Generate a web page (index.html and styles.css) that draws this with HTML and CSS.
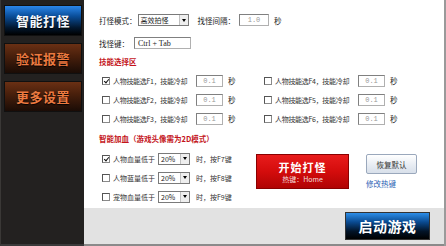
FILE: index.html
```html
<!DOCTYPE html>
<html>
<head>
<meta charset="utf-8">
<link rel="stylesheet" href="styles.css">
</head>
<body>
<div class="app">
  <nav class="side">
    <div class="nav-btn blue">智能打怪</div>
    <div class="nav-btn brown">验证报警</div>
    <div class="nav-btn brown">更多设置</div>
  </nav>
  <div class="main">
    <div class="content">
      <div class="row r1">
        <span class="lbl">打怪模式：</span>
        <span class="select sel-mode"><span class="sel-text">高效拍怪</span><span class="arrow"></span></span>
        <span class="lbl gap-l">找怪间隔：</span>
        <span class="input in-int">1.0</span>
        <span class="unit">秒</span>
      </div>
      <div class="row r2">
        <span class="lbl">找怪键：</span>
        <span class="input in-key">Ctrl + Tab</span>
      </div>
      <div class="title t1">技能选择区</div>
      <div class="skills">
        <div class="sk"><span class="cb checked"></span><span class="txt">人物技能选F1，技能冷却</span><span class="input in-cd">0.1</span><span class="unit">秒</span></div>
        <div class="sk"><span class="cb"></span><span class="txt">人物技能选F4，技能冷却</span><span class="input in-cd">0.1</span><span class="unit">秒</span></div>
        <div class="sk"><span class="cb"></span><span class="txt">人物技能选F2，技能冷却</span><span class="input in-cd">0.1</span><span class="unit">秒</span></div>
        <div class="sk"><span class="cb"></span><span class="txt">人物技能选F5，技能冷却</span><span class="input in-cd">0.1</span><span class="unit">秒</span></div>
        <div class="sk"><span class="cb"></span><span class="txt">人物技能选F3，技能冷却</span><span class="input in-cd">0.1</span><span class="unit">秒</span></div>
        <div class="sk"><span class="cb"></span><span class="txt">人物技能选F6，技能冷却</span><span class="input in-cd">0.1</span><span class="unit">秒</span></div>
      </div>
      <div class="title t2">智能加血（游戏头像需为2D模式）</div>
      <div class="heal">
        <div class="heal-rows">
          <div class="hr"><span class="cb checked"></span><span class="txt">人物血量低于</span><span class="select sel-pct"><span class="sel-text">20%</span><span class="arrow"></span></span><span class="txt2">时，按F7键</span></div>
          <div class="hr"><span class="cb"></span><span class="txt">人物蓝量低于</span><span class="select sel-pct"><span class="sel-text">20%</span><span class="arrow"></span></span><span class="txt2">时，按F8键</span></div>
          <div class="hr"><span class="cb"></span><span class="txt">宠物血量低于</span><span class="select sel-pct"><span class="sel-text">20%</span><span class="arrow"></span></span><span class="txt2">时，按F9键</span></div>
        </div>
        <div class="start">
          <div class="start-main">开始打怪</div>
          <div class="start-sub">热键：Home</div>
        </div>
        <div class="aux">
          <div class="reset">恢复默认</div>
          <div class="link">修改热键</div>
        </div>
      </div>
    </div>
    <div class="bottom">
      <div class="launch">启动游戏</div>
    </div>
  </div>
</div>
</body>
</html>
```
FILE: styles.css
```css
* { box-sizing: border-box; }
html, body { margin: 0; padding: 0; }
body {
  width: 446px; height: 246px; overflow: hidden;
  font-family: "Noto Sans CJK SC", "Noto Sans", sans-serif;
  font-size: 7.5px; color: #222; background: #d6d6d6;
  white-space: nowrap;
}
.app { display: flex; width: 446px; height: 246px; }
.side {
  width: 84px; height: 246px; background: #232120;
  border-left: 1px solid #3a3836; border-bottom: 2px solid #3a3a3a;
  display: flex; flex-direction: column; padding: 5px 2px 0 3px; gap: 7px;
}
.nav-btn {
  height: 31px; display: flex; align-items: center; justify-content: center;
  font-size: 13px; font-weight: bold; letter-spacing: 0.5px;
  border: 1px solid #101010;
}
.nav-btn.blue {
  color: #f4f8ff;
  background: linear-gradient(#2a86ea 0%, #0a4e9a 35%, #02172e 75%, #000 100%);
  text-shadow: 0 1px 1px #000;
}
.nav-btn.brown {
  color: #ec7a40;
  background: linear-gradient(#6a3014 0%, #4a200c 40%, #1a0c06 100%);
  text-shadow: 0 1px 1px #000;
}
.main {
  flex: 1; display: flex; flex-direction: column;
  border-right: 2px solid #9a9a9a;
}
.content {
  height: 208px; background: #fff; padding: 14px 0 0 15px;
  display: flex; flex-direction: column;
}
.row { display: flex; align-items: center; height: 12px; }
.r2 { margin-top: 11px; }
.gap-l { margin-left: 9px; margin-right: 4px; }
.r1 .lbl:first-child { margin-right: 1px; }
.r2 .lbl { margin-right: 5px; }
.select {
  display: inline-flex; align-items: center; height: 12px;
  border: 1px solid #7a7a7a; background: #fff;
  font-size: 7px; flex: none;
}
.sel-text { flex: 1; padding-left: 2px; line-height: 10px; }
.sel-mode { width: 51px; }
.arrow {
  width: 9px; height: 10px; border-left: 1px solid #c0c0c0; background: #eee;
  display: flex; align-items: center; justify-content: center;
}
.arrow::after {
  content: ""; border-left: 2.5px solid transparent; border-right: 2.5px solid transparent;
  border-top: 3px solid #000;
}
.input {
  display: inline-flex; align-items: center; justify-content: center; height: 12px; flex: none;
  border: 1px solid #b0b0b0; border-top-color: #808080; border-left-color: #808080;
  background: #fff; color: #999; font-family: "Liberation Mono", monospace; font-size: 7px;
}
.in-int { width: 30px; }
.in-key { width: 57px; justify-content: flex-start; padding-left: 3px; color: #222; font-family: "Liberation Serif", serif; font-size: 8px; }
.unit { margin-left: 5px; }
.title {
  color: #c4151b; font-weight: bold; font-size: 7.5px; height: 12px; line-height: 12px;
}
.t1 { margin-top: 7px; }
.t2 { margin-top: 8px; }
.skills {
  margin-top: 6px; padding-left: 3px;
  display: grid; grid-template-columns: 162px 162px; row-gap: 6px;
}
.sk { display: flex; align-items: center; height: 13px; }
.cb {
  width: 8px; height: 8px; border: 1px solid #8a8a8a; border-top-color: #555; border-left-color: #555;
  background: #fff; margin-right: 3px; position: relative; flex: none;
}
.cb.checked::after {
  content: ""; position: absolute; left: 1.5px; top: 0px; width: 2px; height: 4px;
  border-right: 1.2px solid #111; border-bottom: 1.2px solid #111; transform: rotate(40deg);
}
.txt { color: #333; font-size: 7px; overflow: hidden; flex: none; }
.sk .txt { width: 82px; letter-spacing: -0.3px; }
.in-cd { width: 27px; margin-left: 1px; }
.heal { display: flex; margin-top: 7px; }
.heal-rows { padding-left: 3px; display: flex; flex-direction: column; gap: 6px; width: 157px; }
.hr { display: flex; align-items: center; height: 13px; }
.hr .txt { width: 45px; }
.sel-pct { width: 32px; }
.txt2 { margin-left: 6px; color: #333; font-size: 7px; }
.start {
  margin-top: 2px; width: 93px; height: 35px;
  background: linear-gradient(#e81c1c 0%, #d40c0c 50%, #b00404 100%);
  border: 1px solid #8a0000;
  display: flex; flex-direction: column; align-items: center; justify-content: center;
  color: #fff;
}
.start-main { font-size: 11px; font-weight: bold; letter-spacing: 1px; line-height: 14px; }
.start-sub { font-size: 7px; line-height: 10px; color: #f4dede; }
.aux { margin-left: 17px; margin-top: 2px; display: flex; flex-direction: column; }
.reset {
  width: 51px; height: 20px; border: 1px solid #9aa8bc; border-radius: 2px;
  background: linear-gradient(#ffffff, #e6ebf2 60%, #d8e0ea);
  display: flex; align-items: center; justify-content: center; color: #333; font-size: 7.5px;
}
.link { margin-top: 4px; color: #2a62b4; font-size: 7.5px; }
.bottom {
  flex: 1; background: #e2e2e2; display: flex; justify-content: flex-end; align-items: flex-start;
  padding: 4px 14px 0 0; border-bottom: 2px solid #8a8a8a;
}
.launch {
  width: 85px; height: 28px; display: flex; align-items: center; justify-content: center;
  font-size: 14px; font-weight: bold; color: #fff; letter-spacing: 0.5px;
  background: linear-gradient(#2c8ee8 0%, #0a4a90 35%, #021428 70%, #000 100%);
  border: 1px solid #333;
}
```
